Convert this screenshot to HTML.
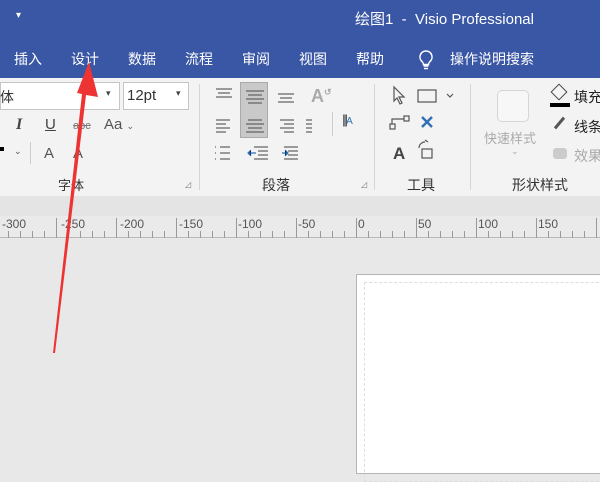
<!DOCTYPE html>
<html><head><meta charset="utf-8"><style>
*{margin:0;padding:0;box-sizing:border-box}
body{width:600px;height:450px;overflow:hidden;position:relative;background:#e8e8e8;font-family:"Liberation Sans","Noto Sans CJK SC",sans-serif}
.a{position:absolute;white-space:nowrap}
#top{position:absolute;left:0;top:0;width:600px;height:78px;background:#3a57a5}
.tab{color:#fff;font-size:14px;top:49px}
#rib{position:absolute;left:0;top:78px;width:600px;height:118px;background:#f3f3f3}
.g{color:#333;font-size:13px}
.sep{position:absolute;top:84px;width:1px;height:106px;background:#d6d6d6}
.ln{position:absolute;height:1px;background:#666}
#band{position:absolute;left:0;top:196px;width:600px;height:20px;background:#e4e4e4}
#ruler{position:absolute;left:0;top:216px;width:600px;height:22px;background:#eaeaea;border-bottom:1px solid #b8b8b8}
.rl{font-size:12px;color:#555;top:217px}
</style></head><body>
<div id="top"></div>
<div class="a" style="left:16px;top:10px;color:#fff;font-size:10px">&#9662;</div>
<div class="a" style="left:355px;top:8px;color:#fff;font-size:15px">绘图1 &nbsp;- &nbsp;Visio Professional</div>
<div class="a tab" style="left:14px">插入</div>
<div class="a tab" style="left:71px">设计</div>
<div class="a tab" style="left:128px">数据</div>
<div class="a tab" style="left:185px">流程</div>
<div class="a tab" style="left:242px">审阅</div>
<div class="a tab" style="left:299px">视图</div>
<div class="a tab" style="left:356px">帮助</div>
<svg class="a" style="left:418px;top:50px" width="16" height="20"><path d="M8 1a6 6 0 0 0-4 10.5c1 1 1.5 2 1.5 3h5c0-1 .5-2 1.5-3A6 6 0 0 0 8 1zM5.5 16h5M6 18.5h4" stroke="#fff" stroke-width="1.5" fill="none"/></svg>
<div class="a tab" style="left:450px">操作说明搜索</div>

<div id="rib"></div>
<div class="a" style="left:0;top:82px;width:120px;height:28px;background:#fff;border:1px solid #c6c6c6"></div>
<div class="a g" style="left:0;top:87px;font-size:14px">体</div>
<div class="a" style="left:106px;top:88px;font-size:9px;color:#444">▾</div>
<div class="a" style="left:123px;top:82px;width:66px;height:28px;background:#fff;border:1px solid #c6c6c6"></div>
<div class="a g" style="left:127px;top:87px;font-size:15px">12pt</div>
<div class="a" style="left:176px;top:88px;font-size:9px;color:#444">▾</div>
<div class="a" style="left:16px;top:116px;font-size:16px;font-style:italic;font-family:'Liberation Serif';color:#444;font-weight:bold">I</div>
<div class="a" style="left:45px;top:116px;font-size:15px;text-decoration:underline;color:#444">U</div>
<div class="a" style="left:73px;top:120px;font-size:11px;text-decoration:line-through;color:#777">abc</div>
<div class="a" style="left:104px;top:116px;font-size:15px;color:#555">Aa <span style="font-size:9px">⌄</span></div>
<div class="a" style="left:0;top:147px;width:4px;height:4px;background:#000"></div>
<div class="a" style="left:14px;top:146px;font-size:9px;color:#555">⌄</div>
<div class="a" style="left:30px;top:142px;width:1px;height:22px;background:#ccc"></div>
<div class="a" style="left:44px;top:145px;font-size:15px;color:#555">A</div>
<div class="a" style="left:73px;top:145px;font-size:15px;color:#555">A</div>
<div class="a g" style="left:58px;top:175px">字体</div>
<div class="a" style="left:185px;top:180px;font-size:8px;color:#777">◿</div>
<div class="sep" style="left:199px"></div>
<div class="a" style="left:240px;top:82px;width:28px;height:56px;background:#c9c9c9;border:1px solid #aaa"></div>
<svg class="a" style="left:212px;top:86px" width="100" height="80" stroke="#666" stroke-width="1.2">
<path d="M4 3h16M6 7h12M4 11h16"/><path d="M34 5h18M36 9h14M34 13h18M36 17h14"/><path d="M66 8h16M68 12h12M66 16h16"/>
<path d="M4 34h14M4 38h10M4 42h14M4 46h10"/><path d="M36 34h14M34 38h18M36 42h14M34 46h18"/><path d="M68 34h14M72 38h10M68 42h14M72 46h10"/><path d="M94 34h14M94 38h14M94 42h14M94 46h14"/>
<path d="M8 61h10M8 67h10M8 73h10M3 61h1M3 67h1M3 73h1"/>
<path d="M42 61h14M46 65h10M46 69h10M42 73h14" /><path d="M44 67h-8M39 64l-3 3 3 3" stroke="#2e6fb8"/>
<path d="M72 61h14M76 65h10M76 69h10M72 73h14" /><path d="M70 67h6M73 64l3 3-3 3" stroke="#2e6fb8"/>
</svg>
<div class="a" style="left:311px;top:86px;font-size:18px;color:#aaa;font-weight:bold">A<sup style="font-size:9px">↺</sup></div>
<div class="a" style="left:332px;top:112px;width:1px;height:24px;background:#ccc"></div>
<div class="a" style="left:342px;top:112px;font-size:13px;color:#555;letter-spacing:-2px">|||<span style="color:#2e6fb8;font-size:10px">A</span></div>
<div class="a g" style="left:262px;top:175px;font-size:14px">段落</div>
<div class="a" style="left:361px;top:180px;font-size:8px;color:#777">◿</div>
<div class="sep" style="left:374px"></div>
<svg class="a" style="left:388px;top:84px" width="80" height="80" fill="none" stroke="#555" stroke-width="1.2">
<path d="M6 3v14l3-3 3 6 2-1-3-6h5z"/><rect x="30" y="6" width="18" height="12"/><path d="M59 10l3 3 3-3"/>
<rect x="2" y="40" width="5" height="5"/><rect x="16" y="32" width="5" height="5"/><path d="M4 40v-5h12"/>
<path d="M34 33l10 10M44 33l-10 10" stroke="#2e6fb8" stroke-width="2.4"/>
<rect x="34" y="65" width="10" height="9"/><path d="M31 64a6 6 0 0 1 6-6M40 58l-3-2"/>
</svg>
<div class="a" style="left:393px;top:144px;font-size:17px;color:#444;font-weight:bold">A</div>
<div class="a g" style="left:407px;top:175px;font-size:14px">工具</div>
<div class="sep" style="left:470px"></div>
<div class="a" style="left:497px;top:90px;width:32px;height:32px;border:1px solid #d6d6d6;border-radius:5px;background:#f7f7f7"></div>
<div class="a" style="left:484px;top:128px;font-size:13px;color:#aaa">快速样式</div>
<div class="a" style="left:511px;top:146px;font-size:9px;color:#aaa">⌄</div>
<div class="a" style="left:550px;top:103px;width:20px;height:4px;background:#000"></div>
<div class="a" style="left:553px;top:86px;width:12px;height:12px;border:1.5px solid #444;transform:rotate(45deg)"></div>
<div class="a" style="left:574px;top:87px;font-size:14px;color:#222">填充</div>
<div class="a" style="left:558px;top:116px;width:3px;height:14px;background:#555;transform:rotate(40deg)"></div>
<div class="a" style="left:574px;top:117px;font-size:14px;color:#222">线条</div>
<div class="a" style="left:553px;top:148px;width:14px;height:11px;background:#ccc;border-radius:3px"></div>
<div class="a" style="left:574px;top:146px;font-size:14px;color:#aaa">效果</div>
<div class="a g" style="left:512px;top:175px;font-size:14px">形状样式</div>

<div id="band"></div>
<div id="ruler"></div>
<svg class="a" style="left:0;top:216px" width="600" height="22" stroke="#999" stroke-width="1">
<g id="t"></g>
</svg>
<script>
var s='';for(var i=-30;i<=60;i++){var x=356+i*12+0.5;if(x<0||x>600)continue;var h=(i%5==0)?20:((i%5==0)?10:7);s+='<line x1="'+x+'" x2="'+x+'" y1="'+(22-h)+'" y2="22"/>';}
document.getElementById('t').innerHTML=s;
</script>
<div class="a rl" style="left:2px">-300</div>
<div class="a rl" style="left:61px">-250</div>
<div class="a rl" style="left:120px">-200</div>
<div class="a rl" style="left:179px">-150</div>
<div class="a rl" style="left:238px">-100</div>
<div class="a rl" style="left:298px">-50</div>
<div class="a rl" style="left:358px">0</div>
<div class="a rl" style="left:418px">50</div>
<div class="a rl" style="left:478px">100</div>
<div class="a rl" style="left:538px">150</div>

<div class="a" style="left:356px;top:274px;width:260px;height:200px;background:#fff;border:1px solid #b5b5b5"></div>
<div class="a" style="left:364px;top:282px;width:260px;height:200px;border:1px dashed #ddd"></div>

<svg class="a" style="left:0;top:0" width="600" height="450">
<polygon points="53,353 55,353 86,95 98,97 89,62 77,93 82,94" fill="#ee3333"/>
</svg>
</body></html>
